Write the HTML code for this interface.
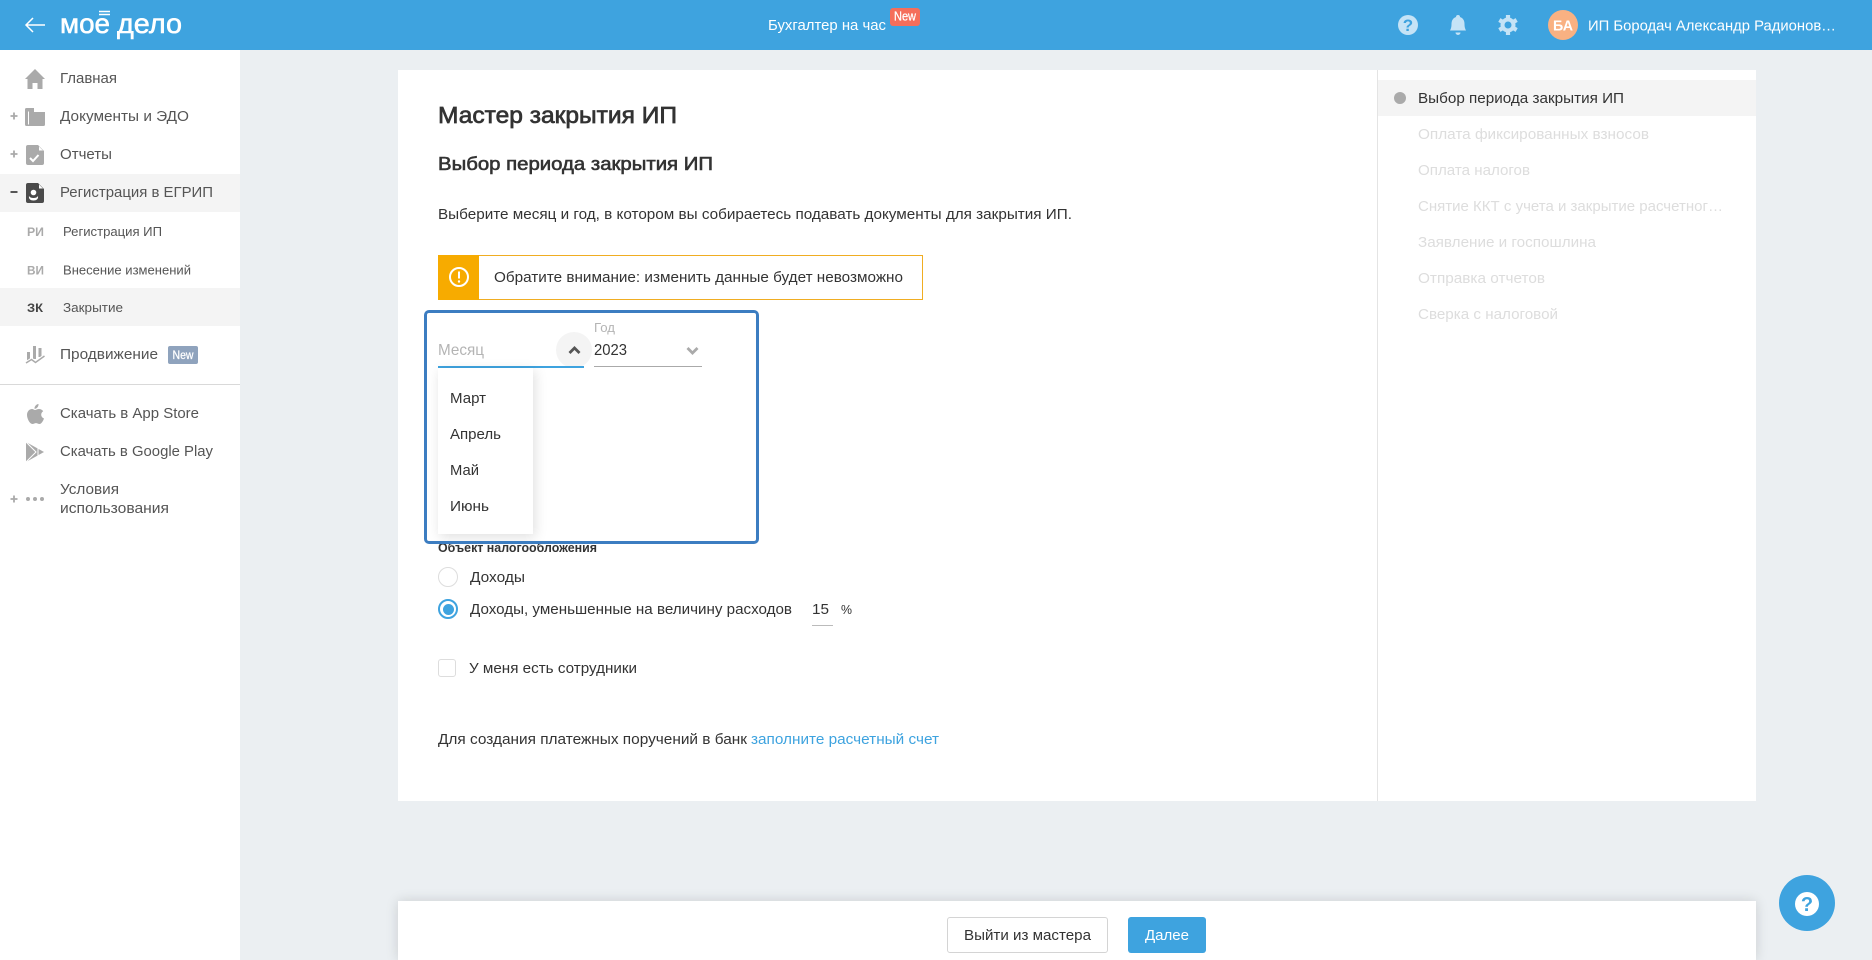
<!DOCTYPE html>
<html lang="ru">
<head>
<meta charset="utf-8">
<title>Мастер закрытия ИП</title>
<style>
html,body{margin:0;padding:0;width:1872px;height:960px;overflow:hidden;background:#ebeff2;font-family:"Liberation Sans",Arial,sans-serif}
.b{position:absolute;box-sizing:border-box}
svg.layer{position:absolute;left:0;top:0;width:1872px;height:960px}
svg text{font-family:"Liberation Sans",Arial,sans-serif;font-size:15px;fill:#333}
.s text{fill:#555}
.m{stroke:#333}
.dis text{fill:#ddd}
</style>
</head>
<body>
<header class="b" style="left:0;top:0;width:1872px;height:50px;background:#3ea3df"></header>
<aside class="b" style="left:0;top:50px;width:240px;height:910px;background:#fff"></aside>
<div class="b" style="left:0;top:174px;width:240px;height:38px;background:#f4f4f4"></div>
<div class="b" style="left:0;top:288px;width:240px;height:38px;background:#f4f4f4"></div>
<div class="b" style="left:0;top:384px;width:240px;height:1px;background:#d9d9d9"></div>
<main class="b" style="left:398px;top:70px;width:1358px;height:731px;background:#fff"></main>
<div class="b" style="left:1377px;top:70px;width:1px;height:731px;background:#e4e4e4"></div>
<div class="b" style="left:1378px;top:80px;width:378px;height:36px;background:#f4f4f4"></div>
<div class="b" style="left:438px;top:255px;width:485px;height:45px;border:1px solid #f0ad22;background:#fff"></div>
<div class="b" style="left:438px;top:255px;width:41px;height:45px;background:#f7ab00"></div>
<div class="b" style="left:556px;top:332px;width:36px;height:36px;border-radius:50%;background:#f4f4f4"></div>
<div class="b" style="left:438px;top:366px;width:146px;height:2px;background:#3ea3df"></div>
<div class="b" style="left:594px;top:366px;width:108px;height:1px;background:#aaa"></div>
<div class="b" style="left:438px;top:368px;width:95px;height:166px;background:#fff;box-shadow:2px 3px 12px rgba(0,0,0,.13)"></div>
<div class="b" style="left:438px;top:567px;width:20px;height:20px;border:1px solid #ddd;border-radius:50%;background:#fff"></div>
<div class="b" style="left:438px;top:599px;width:20px;height:20px;border:2px solid #3ea3df;border-radius:50%;background:#fff"></div>
<div class="b" style="left:442.500px;top:603.500px;width:11px;height:11px;border-radius:50%;background:#3ea3df"></div>
<div class="b" style="left:812px;top:625px;width:21px;height:1px;background:#bbb"></div>
<div class="b" style="left:438px;top:659px;width:18px;height:18px;border:1px solid #ddd;border-radius:3px;background:#fff"></div>
<div class="b" style="left:398px;top:901px;width:1358px;height:59px;background:#fff;box-shadow:0 0 12px rgba(0,0,0,.14)"></div>
<div class="b" style="left:947px;top:917px;width:161px;height:36px;border:1px solid #d4d4d4;border-radius:3px;background:#fff"></div>
<div class="b" style="left:1128px;top:917px;width:78px;height:36px;border-radius:3px;background:#3ea3df"></div>
<div class="b" style="left:1779px;top:875px;width:56px;height:56px;border-radius:50%;background:#3ea3df"></div>
<div class="b" style="left:1795px;top:892px;width:24px;height:24px;border-radius:50%;background:#fff"></div>
<div class="b" style="left:168px;top:346px;width:30px;height:18px;border-radius:2px;background:#8fa3bd"></div>
<div class="b" style="left:890px;top:8px;width:30px;height:18px;border-radius:3px;background:#f56e5b"></div>
<div class="b" style="left:1548px;top:10px;width:30px;height:30px;border-radius:50%;background:#f9b182"></div>

<svg class="layer" viewBox="0 0 1872 960" xmlns="http://www.w3.org/2000/svg">
<!-- header -->
<path d="M45 25H26.500M33 18L26 25L33 32" fill="none" stroke="#fff" stroke-width="1.500"/>
<text x="60" y="33" textLength="50" lengthAdjust="spacingAndGlyphs" style="font-size:28px;fill:#fff;stroke:#fff;stroke-width:.55px">мое</text>
<text x="117" y="33" textLength="65" lengthAdjust="spacingAndGlyphs" style="font-size:28px;fill:#fff;stroke:#fff;stroke-width:.55px">дело</text>
<path d="M99 11.500H110M99 14.500H110" stroke="#fff" stroke-width="1.500"/>
<text x="768" y="30" textLength="118" lengthAdjust="spacingAndGlyphs" style="fill:#fff">Бухгалтер на час</text>
<text x="894" y="20.500" textLength="22" lengthAdjust="spacingAndGlyphs" style="font-size:12.500px;fill:#fff;stroke:#fff;stroke-width:.25px">New</text>
<circle cx="1408" cy="25" r="10" fill="#c5e3f6"/>
<text x="1408" y="31" text-anchor="middle" style="font-size:17px;font-weight:bold;fill:#3ea3df">?</text>
<path d="M1458 15a2 2 0 0 1 2 2c3 1 4.500 3.500 4.500 7c0 3 .5 4.500 1.500 6.500h-16c1-2 1.500-3.500 1.500-6.500c0-3.500 1.500-6 4.500-7a2 2 0 0 1 2-2zM1455.500 32.500h5a2.500 2.500 0 0 1-5 0z" fill="#c5e3f6"/>
<circle cx="1508" cy="25" r="5.500" fill="none" stroke="#c5e3f6" stroke-width="4"/>
<path d="M1508 18V15M1508 32V35M1514.060 21.500L1516.660 20M1501.940 28.500L1499.340 30M1514.060 28.500L1516.660 30M1501.940 21.500L1499.340 20" stroke="#c5e3f6" stroke-width="4.200"/>
<text x="1553" y="30.500" textLength="20" lengthAdjust="spacingAndGlyphs" style="font-weight:bold;fill:#fff">БА</text>
<text x="1588" y="30.500" textLength="248" lengthAdjust="spacingAndGlyphs" style="fill:#fff">ИП Бородач Александр Радионов…</text>

<!-- sidebar -->
<g class="s">
<path d="M35 69L45 79H42.500V89H37.500V83H32.500V89H27.500V79H25Z" fill="#aaa"/>
<text x="60" y="83" textLength="57" lengthAdjust="spacingAndGlyphs">Главная</text>
<path d="M14 112.500v7M10.500 116h7" stroke="#aaa" stroke-width="1.800"/>
<path d="M26.500 108H34V112H45V124.500a1.500 1.500 0 0 1-1.500 1.500H26.500a1.500 1.500 0 0 1-1.500-1.500V109.500a1.500 1.500 0 0 1 1.500-1.500z" fill="#aaa"/>
<path d="M28.500 111.500V124.500" stroke="#fff" stroke-width="1"/>
<text x="60" y="121" textLength="129" lengthAdjust="spacingAndGlyphs">Документы и ЭДО</text>
<path d="M14 150.500v7M10.500 154h7" stroke="#aaa" stroke-width="1.800"/>
<path d="M28 145h10l6 6v12a2 2 0 0 1-2 2H28a2 2 0 0 1-2-2v-16a2 2 0 0 1 2-2z" fill="#aaa"/>
<path d="M39 146.500v4h4z" fill="#fff"/>
<path d="M30 158l3 3 5.500-6" fill="none" stroke="#fff" stroke-width="2"/>
<text x="60" y="159" textLength="52" lengthAdjust="spacingAndGlyphs">Отчеты</text>
<path d="M10.500 192h7" stroke="#444" stroke-width="1.800"/>
<path d="M28 183h10l6 6v12a2 2 0 0 1-2 2H28a2 2 0 0 1-2-2v-16a2 2 0 0 1 2-2z" fill="#4a4a4a"/>
<path d="M39 184.500v4h4z" fill="#fff"/>
<circle cx="33.500" cy="192.500" r="2.800" fill="#fff"/>
<path d="M29 196c1 1.500 2.500 2 4.500 2s3.500-.5 4.500-2c.5 3-1.500 4.500-4.500 4.500s-5-1.500-4.500-4.500z" fill="#fff"/>
<text x="60" y="197" textLength="153" lengthAdjust="spacingAndGlyphs">Регистрация в ЕГРИП</text>
<text x="27" y="236" textLength="17" lengthAdjust="spacingAndGlyphs" style="font-size:12px;font-weight:bold;fill:#aaa">РИ</text>
<text x="63" y="236" textLength="99" lengthAdjust="spacingAndGlyphs" style="font-size:13px">Регистрация ИП</text>
<text x="27" y="274.500" textLength="17" lengthAdjust="spacingAndGlyphs" style="font-size:12px;font-weight:bold;fill:#aaa">ВИ</text>
<text x="63" y="274.500" textLength="128" lengthAdjust="spacingAndGlyphs" style="font-size:13px">Внесение изменений</text>
<text x="27" y="312" textLength="16" lengthAdjust="spacingAndGlyphs" style="font-size:12px;font-weight:bold;fill:#444">ЗК</text>
<text x="63" y="312" textLength="60" lengthAdjust="spacingAndGlyphs" style="font-size:13px">Закрытие</text>
<path d="M28.500 352v9M34.500 346v13M40 348v9" stroke="#aaa" stroke-width="3"/>
<path d="M26 363l5.500-3.500 4 3 9-6.500" fill="none" stroke="#fff" stroke-width="3.600"/>
<path d="M26 363l5.500-3.500 4 3 9-6.500" fill="none" stroke="#aaa" stroke-width="1.500"/>
<text x="60" y="359" textLength="98" lengthAdjust="spacingAndGlyphs">Продвижение</text>
<text x="172.500" y="359" textLength="21" lengthAdjust="spacingAndGlyphs" style="font-size:11.500px;fill:#fff;stroke:#fff;stroke-width:.25px">New</text>
<path d="M38.500 404c.3 2.500-1.800 5-4 4.800c-.3-2.300 1.800-4.600 4-4.800zM35 410c1 0 2.200-1 4-1c1.800 0 3.300.8 4.200 2.200c-3 1.800-2.500 6 .8 7.300c-.8 2.300-2.600 5.500-4.500 5.500c-1.300 0-2-.9-3.500-.9c-1.500 0-2.300.9-3.500.9c-2.800 0-5.500-5.500-5.500-9c0-3.500 2.200-6 5-6c1.200 0 2.500 1 3 1z" fill="#aaa"/>
<text x="60" y="418" textLength="139" lengthAdjust="spacingAndGlyphs">Скачать в App Store</text>
<path d="M26 442L44 452L26 462Z" fill="#aaa"/>
<path d="M26 442L36 452L26 462M38 447.500V456.500" fill="none" stroke="#fff" stroke-width="1"/>
<text x="60" y="456" textLength="153" lengthAdjust="spacingAndGlyphs">Скачать в Google Play</text>
<path d="M14 495.500v7M10.500 499h7" stroke="#aaa" stroke-width="1.800"/>
<circle cx="28" cy="499" r="2" fill="#aaa"/><circle cx="35" cy="499" r="2" fill="#aaa"/><circle cx="42" cy="499" r="2" fill="#aaa"/>
<text x="60" y="494" textLength="59" lengthAdjust="spacingAndGlyphs">Условия</text>
<text x="60" y="513" textLength="109" lengthAdjust="spacingAndGlyphs">использования</text>
</g>

<!-- main -->
<text class="m" x="438" y="123" textLength="239" lengthAdjust="spacingAndGlyphs" style="font-size:23px;stroke-width:.7px">Мастер закрытия ИП</text>
<text class="m" x="438" y="170" textLength="275" lengthAdjust="spacingAndGlyphs" style="font-size:18px;stroke-width:.6px">Выбор периода закрытия ИП</text>
<text x="438" y="219" textLength="634" lengthAdjust="spacingAndGlyphs">Выберите месяц и год, в котором вы собираетесь подавать документы для закрытия ИП.</text>
<circle cx="459" cy="277" r="9" fill="none" stroke="#fff" stroke-width="2"/>
<path d="M459 271.500v7" stroke="#fff" stroke-width="2"/><circle cx="459" cy="281.500" r="1.200" fill="#fff"/>
<text x="494" y="282" textLength="409" lengthAdjust="spacingAndGlyphs">Обратите внимание: изменить данные будет невозможно</text>
<text x="438" y="355" textLength="46" lengthAdjust="spacingAndGlyphs" style="fill:#b4b4b4;font-size:16px">Месяц</text>
<path d="M569.500 353L574.500 348L579.500 353" fill="none" stroke="#555" stroke-width="2.800"/>
<text x="594" y="332" textLength="21" lengthAdjust="spacingAndGlyphs" style="font-size:13px;fill:#b4b4b4">Год</text>
<text x="594" y="355" textLength="33" lengthAdjust="spacingAndGlyphs" style="font-size:16px">2023</text>
<path d="M687.500 348L692.500 353L697.500 348" fill="none" stroke="#aaa" stroke-width="2.800"/>
<text x="450" y="403" textLength="36" lengthAdjust="spacingAndGlyphs">Март</text>
<text x="450" y="439" textLength="51" lengthAdjust="spacingAndGlyphs">Апрель</text>
<text x="450" y="475" textLength="29" lengthAdjust="spacingAndGlyphs">Май</text>
<text x="450" y="511" textLength="39" lengthAdjust="spacingAndGlyphs">Июнь</text>
<text x="438" y="552" textLength="159" lengthAdjust="spacingAndGlyphs" style="font-size:12.500px;font-weight:bold">Объект налогообложения</text>
<text x="470" y="582" textLength="55" lengthAdjust="spacingAndGlyphs">Доходы</text>
<text x="470" y="614" textLength="322" lengthAdjust="spacingAndGlyphs">Доходы, уменьшенные на величину расходов</text>
<text x="812" y="614" textLength="17" lengthAdjust="spacingAndGlyphs">15</text>
<text x="841" y="614" textLength="11" lengthAdjust="spacingAndGlyphs" style="font-size:13px">%</text>
<text x="469" y="673" textLength="168" lengthAdjust="spacingAndGlyphs">У меня есть сотрудники</text>
<text x="438" y="744" textLength="309" lengthAdjust="spacingAndGlyphs">Для создания платежных поручений в банк</text>
<text x="751" y="744" textLength="188" lengthAdjust="spacingAndGlyphs" style="fill:#3ea3df">заполните расчетный счет</text>

<!-- right nav -->
<circle cx="1400" cy="98" r="6" fill="#aaa"/>
<text x="1418" y="103" textLength="206" lengthAdjust="spacingAndGlyphs">Выбор периода закрытия ИП</text>
<g class="dis">
<text x="1418" y="139" textLength="231" lengthAdjust="spacingAndGlyphs">Оплата фиксированных взносов</text>
<text x="1418" y="175" textLength="112" lengthAdjust="spacingAndGlyphs">Оплата налогов</text>
<text x="1418" y="211" textLength="305" lengthAdjust="spacingAndGlyphs">Снятие ККТ с учета и закрытие расчетног…</text>
<text x="1418" y="247" textLength="178" lengthAdjust="spacingAndGlyphs">Заявление и госпошлина</text>
<text x="1418" y="283" textLength="127" lengthAdjust="spacingAndGlyphs">Отправка отчетов</text>
<text x="1418" y="319" textLength="140" lengthAdjust="spacingAndGlyphs">Сверка с налоговой</text>
</g>

<!-- footer -->
<text x="964" y="940" textLength="127" lengthAdjust="spacingAndGlyphs">Выйти из мастера</text>
<text x="1145" y="940" textLength="44" lengthAdjust="spacingAndGlyphs" style="fill:#fff">Далее</text>
<text x="1807" y="911" text-anchor="middle" style="font-size:20px;font-weight:bold;fill:#3ea3df">?</text>
</svg>
<div class="b" style="left:424px;top:310px;width:335px;height:234px;border:3px solid #3c7dc1;border-radius:5px;z-index:2"></div>
</body>
</html>
